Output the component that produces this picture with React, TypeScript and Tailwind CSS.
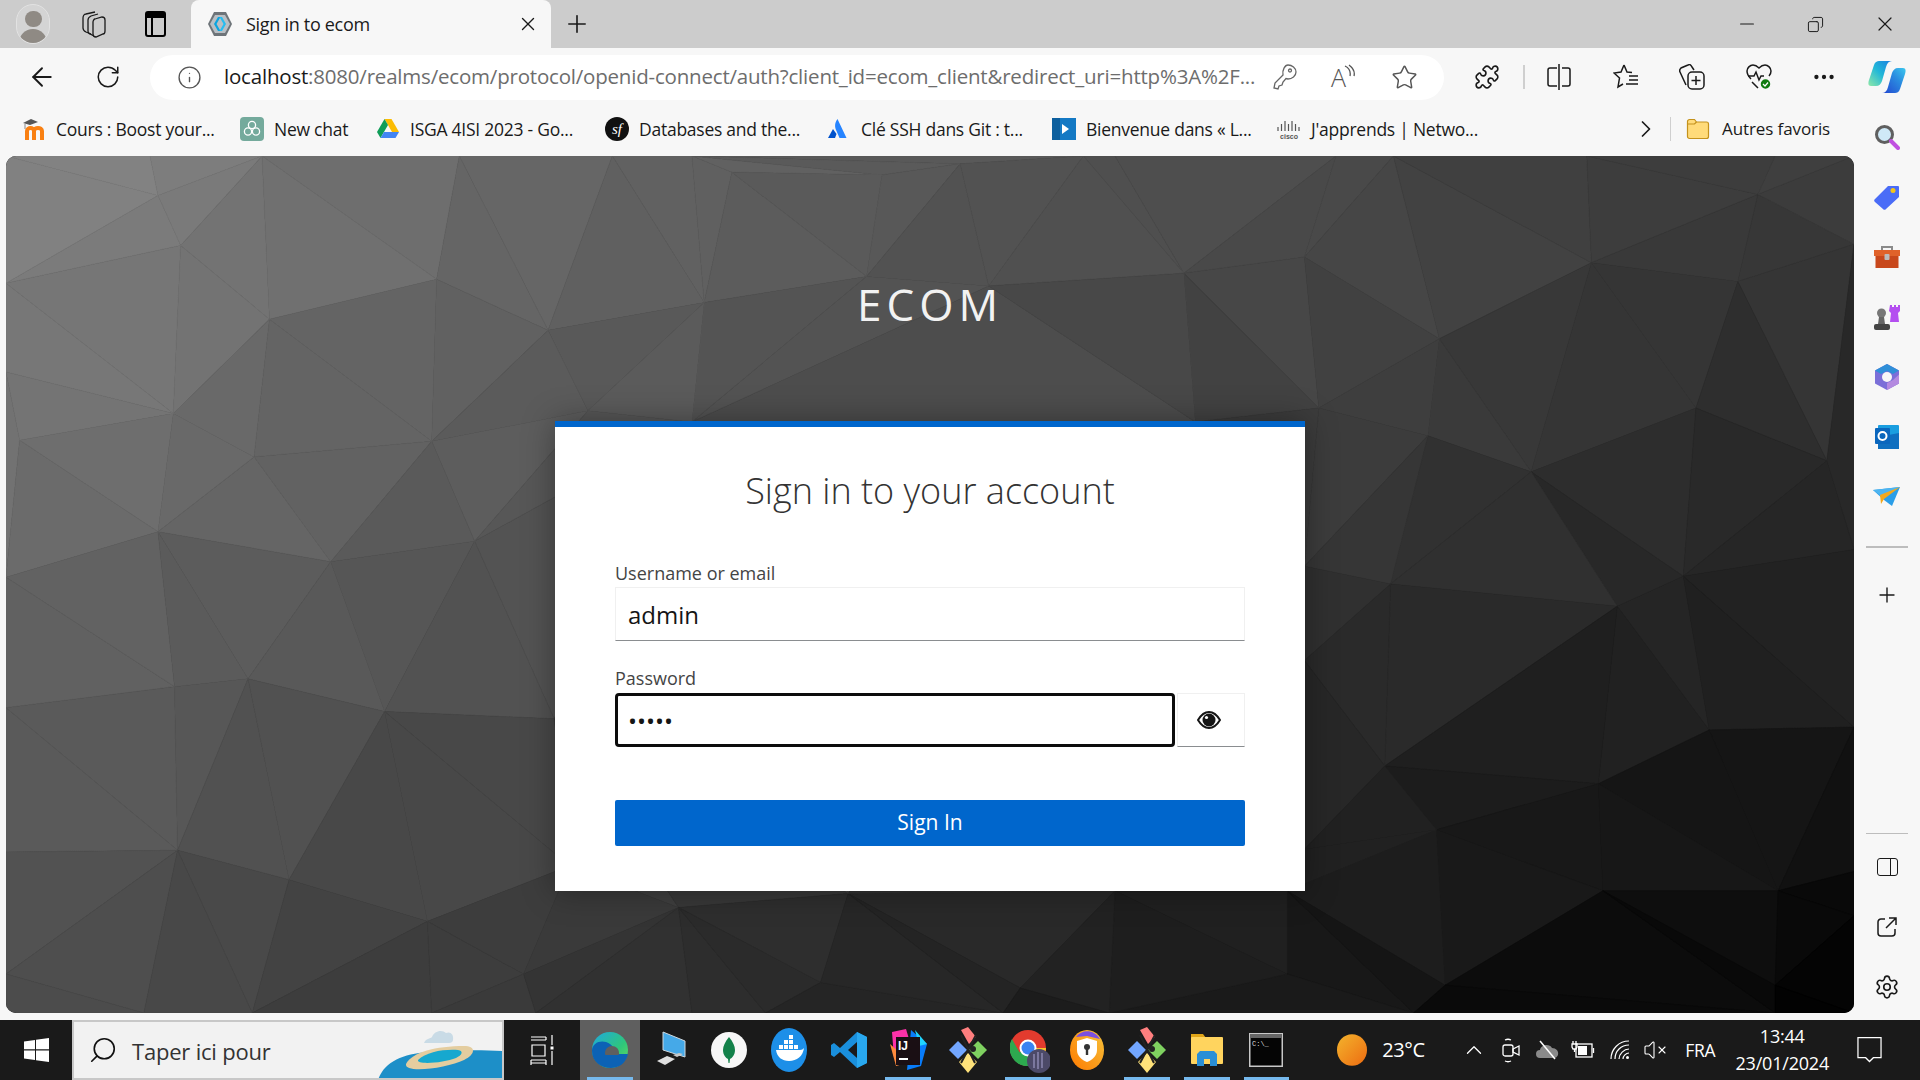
import React from 'react'
import {
  ArrowLeft, RotateCw, Info, Star, Puzzle, Minus, Copy, X, Plus, MoreHorizontal,
  Settings, ChevronRight, ChevronUp, Search, VolumeX,
} from 'lucide-react'

// Low-poly backdrop: vertices read off the reference, in zoom coordinates
const LEFT_PTS = [
  [10,10],[245,10],[428,10],[750,10],[1000,10],[1130,10],[1195,40],[1440,45],[1568,25],[258,82],[295,172],[10,240],
  [440,305],[713,233],[895,325],[1150,275],[1415,228],[283,475],[32,523],[10,400],[415,553],[705,525],[960,470],
  [1130,490],[258,688],[10,770],[540,742],[775,705],[285,967],[10,1005],[405,953],[628,1012],[905,1025],[290,1262],
  [10,1265],[472,1315],[698,1390],[10,1485],[235,1558],[412,1558],[705,1558],[855,1485],[1108,1365],[930,1290],
  [875,1558],[1130,1558],[1385,1340],[1340,1500],[1250,1558],[10,1558],
]
const RIGHT_PTS = [
  [215,10],[270,10],[390,222],[600,193],[655,10],[755,10],[835,340],[1100,203],[1092,10],[1390,80],[1420,10],
  [1558,170],[1355,237],[1282,465],[995,580],[625,465],[815,515],[1558,10],[1510,560],[1558,720],[1260,768],
  [1145,822],[750,782],[600,750],[1305,1045],[1558,1040],[740,1110],[1112,1142],[830,1225],[600,920],[1120,1335],
  [1425,1335],[1558,1300],[845,1505],[570,1485],[570,1335],[600,1260],[1420,1505],[1558,1380],[1420,1558],[790,1558],
  [270,1335],[105,1510],[260,1558],[75,1558],[410,490],[50,245],[1558,1558],
]
const W = 1848
const H = 857

function toY(y: number) {
  if (y <= 10) return 0
  if (y >= 1558) return H
  return y / 1.802 + 150 - 156
}
const points: number[][] = [
  ...LEFT_PTS.map(([x, y]) => [x <= 10 ? 0 : x / 1.633 - 6, toY(y)]),
  ...RIGHT_PTS.map(([x, y]) => [x >= 1558 ? W : 960 + x / 1.742 - 6, toY(y)]),
]

// Bowyer-Watson
function triangulate(pts: number[][]) {
  const all = [...pts, [-9000, -9000], [12000, -9000], [1000, 12000]]
  const n = pts.length
  let tris: number[][] = [[n, n + 1, n + 2]]
  const inCircle = (t: number[], p: number[]) => {
    const [a, b, c] = t.map((i) => all[i])
    const d = 2 * (a[0] * (b[1] - c[1]) + b[0] * (c[1] - a[1]) + c[0] * (a[1] - b[1]))
    const sa = a[0] ** 2 + a[1] ** 2
    const sb = b[0] ** 2 + b[1] ** 2
    const sc = c[0] ** 2 + c[1] ** 2
    const ux = (sa * (b[1] - c[1]) + sb * (c[1] - a[1]) + sc * (a[1] - b[1])) / d
    const uy = (sa * (c[0] - b[0]) + sb * (a[0] - c[0]) + sc * (b[0] - a[0])) / d
    return (p[0] - ux) ** 2 + (p[1] - uy) ** 2 < (a[0] - ux) ** 2 + (a[1] - uy) ** 2
  }
  for (let i = 0; i < n; i++) {
    const bad = tris.filter((t) => inCircle(t, all[i]))
    const edges = new Map<string, number[]>()
    bad.forEach((t) => {
      ;[[t[0], t[1]], [t[1], t[2]], [t[2], t[0]]].forEach(([u, v]) => {
        const k = u < v ? `${u}-${v}` : `${v}-${u}`
        if (edges.has(k)) edges.set(k, [])
        else edges.set(k, [u, v])
      })
    })
    tris = tris.filter((t) => !bad.includes(t))
    edges.forEach((e) => {
      if (e.length) tris.push([e[0], e[1], i])
    })
  }
  return tris.filter((t) => t.every((i) => i < n))
}

const SHADES = [
  [134, 86, 60],
  [104, 66, 32],
  [80, 34, 2],
]
function shade(x: number, y: number, seed: number) {
  const u = Math.min(1.999, (x / W) * 2)
  const v = Math.min(1.999, (y / H) * 2)
  const i = Math.floor(u)
  const j = Math.floor(v)
  const fu = u - i
  const fv = v - j
  const top = SHADES[j][i] * (1 - fu) + SHADES[j][i + 1] * fu
  const bot = SHADES[j + 1][i] * (1 - fu) + SHADES[j + 1][i + 1] * fu
  const noise = (Math.sin(seed * 12.9898) * 43758.5453) % 1
  const g = Math.max(0, Math.round(top * (1 - fv) + bot * fv + noise * 3))
  return `rgb(${g},${g},${g})`
}

function LowPoly() {
  const tris = triangulate(points)
  return (
    <svg viewBox={`0 0 ${W} ${H}`} className="block w-full h-full [grid-area:1/1]" preserveAspectRatio="none">
      {tris.map((t, idx) => {
        const [a, b, c] = t.map((i) => points[i])
        const fill = shade((a[0] + b[0] + c[0]) / 3, (a[1] + b[1] + c[1]) / 3, idx + 1)
        return <polygon key={idx} points={`${a} ${b} ${c}`} fill={fill} stroke={fill} strokeWidth="0.6" />
      })}
    </svg>
  )
}

/* ---- little logos ---- */
const Keycloak = () => (
  <svg width="26" height="26" viewBox="0 0 26 26">
    <path d="M7 1h12l6 12-6 12H7L1 13z" fill="#6e7479" />
    <path d="M8 4h10l5 9-5 9H8l-5-9z" fill="#b9bfc4" />
    <path d="M11 6l-4 7 4 7h2.500l-4-7 4-7z" fill="#0aa5e0" />
    <path d="M15 6l4 7-4 7h-2.500l4-7-4-7z" fill="#27bdf0" />
  </svg>
)
const Moodle = () => (
  <svg width="26" height="24" viewBox="0 0 26 24">
    <path d="M1 6l8-4 7 3-8 3z" fill="#555" />
    <path d="M3 7v5" stroke="#888" strokeWidth="1" />
    <path d="M5 23V14c0-4 7-4 7 0v9M12 14c0-4 8-4 8 0v9" fill="none" stroke="#f98012" strokeWidth="4" />
  </svg>
)
const ChatGpt = () => (
  <svg width="24" height="24" viewBox="0 0 24 24">
    <rect width="24" height="24" rx="4" fill="#74aa9c" />
    <g fill="none" stroke="#fff" strokeWidth="1.300">
      <circle cx="12" cy="8" r="3.600" />
      <circle cx="8" cy="14.500" r="3.600" />
      <circle cx="16" cy="14.500" r="3.600" />
    </g>
  </svg>
)
const Drive = () => (
  <svg width="24" height="24" viewBox="0 0 24 24">
    <path d="M8.500 2h7L23 15h-7z" fill="#fbbc04" />
    <path d="M8.500 2L1 15l3.500 6L12 8z" fill="#0f9d58" />
    <path d="M4.500 21h15L23 15H8z" fill="#4285f4" />
  </svg>
)
const Symfony = () => (
  <svg width="24" height="24" viewBox="0 0 24 24">
    <circle cx="12" cy="12" r="12" fill="#111" />
    <text x="12" y="17" textAnchor="middle" fontFamily="'Liberation Serif', serif" fontStyle="italic" fontSize="15" fill="#fff">sf</text>
  </svg>
)
const Atlassian = () => (
  <svg width="20" height="22" viewBox="0 0 20 22">
    <path d="M10.500 1c-3 4-3 8-1 12l3 7h7z" fill="#2684ff" />
    <path d="M6 11L1 20h7l1.500-4z" fill="#0052cc" />
  </svg>
)
const VideoTile = () => (
  <svg width="24" height="22" viewBox="0 0 24 22">
    <rect width="24" height="22" fill="#1479c4" />
    <rect x="0" y="0" width="8" height="22" fill="#0c5f9e" />
    <path d="M10 6l7 5-7 5z" fill="#fff" />
  </svg>
)
const Cisco = () => (
  <svg width="24" height="24" viewBox="0 0 24 24">
    <g stroke="#555" strokeWidth="1.200">
      {[[1, 10, 14], [4.5, 7, 14], [8, 4, 14], [11.5, 7, 14], [15, 4, 14], [18.5, 7, 14], [22, 10, 14]].map(([x, a, b]) => (
        <line key={x} x1={x} x2={x} y1={a} y2={b} />
      ))}
    </g>
    <text x="12" y="22" textAnchor="middle" fontFamily="'Liberation Sans', sans-serif" fontSize="7" fontWeight="700" fill="#555">cisco</text>
  </svg>
)
const Folder = () => (
  <svg width="24" height="22" viewBox="0 0 24 22">
    <path d="M1.500 3.500A2 2 0 0 1 3.500 1.500h5l2 2.500h10a2 2 0 0 1 2 2v12.500a2 2 0 0 1-2 2h-17a2 2 0 0 1-2-2z" fill="#ffdb7a" stroke="#c4921c" strokeWidth="1.200" />
    <path d="M1.500 6h7l2-2" fill="none" stroke="#c4921c" strokeWidth="1.200" />
  </svg>
)
const Copilot = () => (
  <svg width="38" height="32" viewBox="0 0 38 32">
    <defs>
      <linearGradient id="cp1" x1="0" y1="1" x2="1" y2="0"><stop offset="0" stopColor="#8ee8a8" /><stop offset="0.5" stopColor="#22b8d8" /><stop offset="1" stopColor="#1a7fe0" /></linearGradient>
      <linearGradient id="cp2" x1="0" y1="1" x2="1" y2="0"><stop offset="0" stopColor="#2346d0" /><stop offset="0.6" stopColor="#2a8ce0" /><stop offset="1" stopColor="#3cc8ee" /></linearGradient>
    </defs>
    <path d="M11 0h13c-3 0-5 2-6 6l-4 14c-1 3-3 5-6 5H3c-3 0-3-3-2-6L6 4c1-3 3-4 5-4z" fill="url(#cp1)" />
    <path d="M27 32H14c3 0 5-2 6-6l4-14c1-3 3-5 6-5h5c3 0 3 3 2 6l-5 15c-1 3-3 4-5 4z" fill="url(#cp2)" />
  </svg>
)

/* ---- sidebar logos ---- */
const SideSearch = () => (
  <svg width="26" height="26" viewBox="0 0 26 26">
    <circle cx="10.500" cy="10.500" r="8" fill="#cfe9f7" stroke="#5f5f5f" strokeWidth="3" />
    <path d="M17 17l7 7" stroke="#c04fe0" strokeWidth="4" strokeLinecap="round" />
  </svg>
)
const SideTag = () => (
  <svg width="26" height="26" viewBox="0 0 26 26">
    <path d="M1 15L14 2h10a1 1 0 0 1 1 1v10L12 25a2 2 0 0 1-3 0L1 18a2 2 0 0 1 0-3z" fill="#4a6cf7" />
    <circle cx="19" cy="6.500" r="2.500" fill="#f5c518" />
  </svg>
)
const SideBox = () => (
  <svg width="28" height="24" viewBox="0 0 28 24">
    <path d="M9 5V2h10v3" fill="none" stroke="#8a8a8a" strokeWidth="2" />
    <rect x="1" y="5" width="26" height="6" fill="#e0622a" />
    <rect x="2.500" y="11" width="23" height="12" fill="#c8481c" />
    <rect x="11.500" y="9" width="5" height="6" rx="1" fill="#bbb" />
  </svg>
)
const SideChess = () => (
  <svg width="28" height="28" viewBox="0 0 28 28">
    <path d="M17 2h2v2h2V2h2v2h2V2h2v6l-2 2 1 9h-9l1-9-2-2z" fill="#b44ff0" />
    <circle cx="8.500" cy="10" r="4.500" fill="#777" />
    <path d="M6 14h5l1 7H5z" fill="#666" />
    <rect x="1" y="21" width="16" height="6" rx="2" fill="#444" />
  </svg>
)
const SideM365 = () => (
  <svg width="26" height="28" viewBox="0 0 26 28">
    <path d="M13 1l12 6.500v13L13 27 1 20.500v-13z" fill="#7b6fd8" />
    <path d="M13 1l12 6.500-6 3.500-6-3L7 11 1 7.500z" fill="#2f8fd8" />
    <path d="M13 27l12-6.500v-9L19 17l-6 3z" fill="#b48ae0" />
    <circle cx="13" cy="14" r="5" fill="#f7f7f7" />
  </svg>
)
const SideOutlook = () => (
  <svg width="26" height="26" viewBox="0 0 26 26">
    <rect x="4" y="1" width="21" height="24" rx="1" fill="#1a9ee0" />
    <path d="M4 13l21-4v16H4z" fill="#0f6fc0" />
    <rect x="1" y="4" width="15" height="16" rx="1" fill="#0a66bd" />
    <circle cx="8.500" cy="12" r="4" fill="none" stroke="#fff" strokeWidth="2" />
  </svg>
)
const SidePaper = () => (
  <svg width="28" height="20" viewBox="0 0 28 20">
    <path d="M0 3l27-3-8 19-8-6z" fill="#2a9ee8" />
    <path d="M0 3l27-3L8 9z" fill="#4db4f0" />
    <path d="M27 0L7 8l1 9 3-5z" fill="#f2a81d" />
  </svg>
)
const IconCell = ({ children }: { children: React.ReactNode }) => (
  <div className="h-[60px] flex items-center justify-center">{children}</div>
)

/* ---- taskbar logos ---- */
const WinLogo = () => (
  <svg width="25" height="24" viewBox="0 0 25 24" fill="#fff">
    <path d="M0 3.500l11-1.500v9.300H0zM12 1.800L25 0v11.300H12zM0 12.500h11V22L0 20.500zM12 12.500h13V24l-13-1.800z" />
  </svg>
)
const TaskView = () => (
  <svg width="24" height="32" viewBox="0 0 24 32" fill="none" stroke="#fff" strokeWidth="1.200">
    <path d="M1 3h15M16 3v3M1 6h15M2 11h13v11H2zM1 26h15M1 29h15M16 26v5M1 26v5" />
    <path d="M22 1v10M22 17v14" />
    <rect x="20.500" y="12.500" width="3" height="3" fill="#fff" stroke="none" />
  </svg>
)
const EdgeLogo = () => (
  <svg width="38" height="38" viewBox="0 0 38 38">
    <defs>
      <linearGradient id="edg" x1="0" y1="0" x2="1" y2="1"><stop offset="0" stopColor="#1fa8e0" /><stop offset="0.6" stopColor="#2fc67a" /><stop offset="1" stopColor="#6bdc5c" /></linearGradient>
    </defs>
    <circle cx="19" cy="19" r="18" fill="url(#edg)" />
    <path d="M1 20c0-8 8-11 14-9 7 2 9 8 6 12h16c-2 9-9 14-17 14C9 37 1 30 1 20z" fill="#0c62b5" />
    <path d="M14 22c0-4 3-7 7-7s7 3 7 7c0 1 0 2-1 2H15c-1 0-1-1-1-2z" fill="#5f5f5f" />
  </svg>
)
const PcLogo = () => (
  <svg width="34" height="38" viewBox="0 0 34 38">
    <path d="M10 1l22 9v16l-22-7z" fill="#45a9e8" stroke="#cfd8de" strokeWidth="1" />
    <path d="M4 30l10-5 8 3-10 6z" fill="#e0e0e0" />
    <path d="M20 24l6-2 4 1-6 3z" fill="#c8c8c8" />
  </svg>
)
const Mongo = () => (
  <svg width="36" height="36" viewBox="0 0 36 36">
    <circle cx="18" cy="18" r="18" fill="#f7f7f7" />
    <path d="M18 5c4 5 6 9 6 13 0 5-3 8-5 9l-.5 4h-1L17 27c-2-1-5-4-5-9 0-4 2-8 6-13z" fill="#13814a" />
  </svg>
)
const Docker = () => (
  <svg width="36" height="44" viewBox="0 0 36 44">
    <ellipse cx="18" cy="22" rx="18" ry="22" fill="#1d8fe8" />
    <path d="M5 22h24c2 0 3-1 4-2-1 8-7 13-15 13-7 0-12-4-13-11z" fill="#fff" />
    <g fill="#fff">
      <rect x="8" y="17" width="4" height="4" /><rect x="13" y="17" width="4" height="4" /><rect x="18" y="17" width="4" height="4" /><rect x="23" y="17" width="4" height="4" />
      <rect x="13" y="12" width="4" height="4" /><rect x="18" y="12" width="4" height="4" /><rect x="18" y="7" width="4" height="4" />
    </g>
  </svg>
)
const VsCode = () => (
  <svg width="36" height="36" viewBox="0 0 36 36">
    <path d="M26 0l10 5v26l-10 5L9 20 3 25 0 23V13l3-2 6 5zM26 10l-9 8 9 8z" fill="#1a8fdc" />
    <path d="M26 0l10 5v26l-10 5z" fill="#29a8ef" />
  </svg>
)
const Idea = () => (
  <svg width="38" height="44" viewBox="0 0 38 44">
    <path d="M3 4l14-3 3 10L5 30z" fill="#fc31a8" />
    <path d="M1 16l6 22 14-4z" fill="#ff8a3d" />
    <path d="M22 2l16 14-6 22-14 4z" fill="#087cfa" />
    <path d="M26 2l12 14-8 2z" fill="#21d4fd" />
    <rect x="7" y="9" width="24" height="28" fill="#1a0f14" />
    <text x="9" y="22" fontFamily="'Liberation Sans', sans-serif" fontWeight="700" fontSize="12" fill="#fff">IJ</text>
    <rect x="10" y="30" width="9" height="2" fill="#fff" />
  </svg>
)
const GitGui = () => (
  <svg width="38" height="46" viewBox="0 0 38 46">
    <path d="M12 3l7-3 8 10-7 7z" fill="#ff7f7f" />
    <path d="M9 14l9 9-9 9-9-9z" fill="#72a6ff" />
    <path d="M29 14l9 9-9 9-9-9z" fill="#7fd160" />
    <path d="M19 26l9 9-9 11-9-11z" fill="#ffe27a" />
    <path d="M12 8l14 28M27 8L12 36" stroke="#222" strokeWidth="2" />
    <circle cx="24" cy="22" r="3" fill="#222" />
  </svg>
)
const Chrome = () => (
  <svg width="40" height="48" viewBox="0 0 40 48" className="ml-[4px]">
    <circle cx="18" cy="22" r="18" fill="#e33b2e" />
    <path d="M18 22L2 30a18 18 0 0 0 18 10z" fill="#2da94f" />
    <path d="M2 13l9 16 7 11a18 18 0 0 1-16-27z" fill="#2da94f" />
    <path d="M18 22h18a18 18 0 0 1-16 18z" fill="#f8c52b" />
    <circle cx="18" cy="22" r="8.500" fill="#fff" />
    <circle cx="18" cy="22" r="6.500" fill="#3a83f1" />
    <circle cx="29" cy="35" r="12" fill="#4c4a68" />
    <path d="M24 28v14M28 26v17M32 27v15" stroke="#8b88b0" strokeWidth="1.500" />
  </svg>
)
const Avast = () => (
  <svg width="34" height="40" viewBox="0 0 34 40">
    <defs>
      <linearGradient id="av" x1="0" y1="1" x2="1" y2="0"><stop offset="0" stopColor="#ff7a00" /><stop offset="1" stopColor="#f5c33b" /></linearGradient>
    </defs>
    <ellipse cx="17" cy="20" rx="17" ry="20" fill="url(#av)" />
    <path d="M6 7c6-8 18-8 24 2L17 6z" fill="#7b4fe0" />
    <path d="M17 8l10 3v9c0 6-5 10-10 12-5-2-10-6-10-12v-9z" fill="#fff" />
    <circle cx="17" cy="17" r="3" fill="#333" />
    <rect x="15.800" y="18" width="2.400" height="7" fill="#333" />
  </svg>
)
const Explorer = () => (
  <svg width="34" height="36" viewBox="0 0 34 36">
    <path d="M1 2h12l3 4H1z" fill="#e0a518" />
    <rect x="1" y="5" width="32" height="27" rx="1" fill="#ffd45e" />
    <path d="M7 34V22l3-3h14l3 3v12h-7v-7h-6v7z" fill="#2a8fd6" />
  </svg>
)
const Cmd = () => (
  <svg width="34" height="34" viewBox="0 0 34 34">
    <rect width="34" height="34" fill="#c8c8c8" />
    <rect x="1" y="1" width="32" height="4" fill="#666" />
    <rect x="1.500" y="5" width="31" height="27.500" fill="#050505" />
    <text x="3" y="13" fontFamily="'Liberation Mono', monospace" fontSize="7" fill="#ddd">C:\_</text>
  </svg>
)

const TaskCell = ({ children, active, running }: { children: React.ReactNode; active?: boolean; running?: boolean }) => (
  <div className={`w-[59.7px] h-full flex flex-col items-center justify-center relative ${active ? 'bg-[#5f5f5f]' : ''}`}>
    {children}
    {running && <div className="absolute bottom-0 inset-x-[7px] h-[3px] bg-[#76b9ed]" />}
  </div>
)

const BOOKMARKS: [React.ReactNode, string, string][] = [
  [<Moodle />, 'Cours : Boost your...', 'w-[218px]'],
  [<ChatGpt />, 'New chat', 'w-[136px]'],
  [<Drive />, 'ISGA 4ISI 2023 - Go...', 'w-[229px]'],
  [<Symfony />, 'Databases and the...', 'w-[222px]'],
  [<Atlassian />, 'Clé SSH dans Git : t...', 'w-[225px]'],
  [<VideoTile />, 'Bienvenue dans « L...', 'w-[225px]'],
  [<Cisco />, "J'apprends | Netwo...", 'w-[357px]'],
]

export default function App() {
  return (
    <div className="w-[1920px] h-screen overflow-hidden flex flex-col bg-[#f7f7f7] font-['Open_Sans',sans-serif] text-[#1a1a1a]">
      {/* Onglets */}
      <div className="h-12 bg-[#cccccc] flex items-center shrink-0">
        <div className="w-[66px] flex justify-center">
          <div className="w-[34px] h-[40px] rounded-full bg-[#d4d4d4] border border-[#e2e2e2] flex flex-col items-center overflow-hidden">
            <div className="w-[17px] h-[19px] mt-[6px] rounded-full bg-[#8f8a84]" />
            <div className="w-[28px] h-[16px] mt-[2px] rounded-t-full bg-[#8f8a84]" />
          </div>
        </div>
        <div className="w-[54px] flex justify-center">
          <svg width="26" height="28" viewBox="0 0 26 28" fill="none" stroke="#1a1a1a" strokeWidth="1.300">
            <path d="M11 24L6 22c-2-1-3-2-3-4V8c0-2 1-4 3-4l9-2" />
            <path d="M14 26l-4-2c-1 0-2-2-2-3V10c0-2 1-3 3-4l7-2" />
            <path d="M15 9l7-2c2 0 3 1 3 3v11c0 2-1 3-2 3l-7 3c-2 0-3-1-3-3V12c0-1 1-3 2-3z" />
          </svg>
        </div>
        <div className="w-[71px] flex justify-center">
          <div className="w-[21px] h-[26px] rounded-[3px] border-2 border-black flex flex-col">
            <div className="h-[5px] bg-black" />
            <div className="flex-1 w-[6px] border-r-2 border-black" />
          </div>
        </div>
        <div className="w-[360px] h-full bg-[#f7f7f7] rounded-t-lg flex items-center pl-[16px] pr-[12px]">
          <Keycloak />
          <span className="ml-[13px] text-[18px] flex-1 tracking-[-0.3px]">Sign in to ecom</span>
          <X size={22} strokeWidth={1.5} />
        </div>
        <div className="w-[50px] flex justify-center ml-[1px]"><Plus size={28} strokeWidth={1.4} /></div>
        <div className="flex-1" />
        <div className="w-[69px] flex justify-center"><Minus size={22} strokeWidth={1.2} /></div>
        <div className="w-[69px] flex justify-center"><Copy size={17} strokeWidth={1.4} className="-scale-x-100" /></div>
        <div className="w-[70px] flex justify-center pr-[1px]"><X size={24} strokeWidth={1.2} /></div>
      </div>

      {/* Barre d'adresse */}
      <div className="h-[58px] flex items-center shrink-0">
        <div className="w-[84px] flex justify-center"><ArrowLeft size={30} strokeWidth={1.5} /></div>
        <div className="w-[48px] flex justify-center"><RotateCw size={26} strokeWidth={1.4} /></div>
        <div className="ml-[18px] w-[1294px] h-[45px] rounded-full bg-white flex items-center pl-[27px] overflow-hidden">
          <Info size={25} strokeWidth={1.3} className="text-[#555] shrink-0" />
          <span className="ml-[22px] w-[1030px] shrink-0 text-[20.500px] whitespace-nowrap tracking-[-0.2px] -mt-[2px]">
            localhost<span className="text-[#6d6d6d]">:8080/realms/ecom/protocol/openid-connect/auth?client_id=ecom_client&amp;redirect_uri=http%3A%2F...</span>
          </span>
          <svg width="24" height="26" viewBox="0 0 24 26" fill="none" stroke="#666" strokeWidth="1.300" className="ml-[19px] shrink-0">
            <path d="M15 1c4 0 8 3 8 7s-4 7-8 7l-2-.5L10 18l-1 3-3 1-1 3-4-1 1-5 8-8c-1-5 2-10 5-10z" />
            <circle cx="17" cy="6.500" r="1.500" />
          </svg>
          <div className="ml-[34px] w-[26px] shrink-0 flex items-start">
            <span className="text-[25px] font-light text-[#555] leading-none">A</span>
            <svg width="12" height="16" viewBox="0 0 12 16" fill="none" stroke="#555" strokeWidth="1.300" className="shrink-0 -ml-[2px] -mt-[1px]"><path d="M1 2c4 2 6 5 5 10M5 1c4 3 6 7 5 11" /></svg>
          </div>
          <Star size={27} strokeWidth={1.3} className="text-[#555] ml-[34px] shrink-0" />
        </div>
        <div className="ml-[18px] w-[50px] flex justify-center"><Puzzle size={26} strokeWidth={1.5} /></div>
        <div className="ml-[11px] w-[2px] h-[24px] bg-[#cfcfcf]" />
        <div className="w-[68px] flex justify-center">
          <svg width="24" height="26" viewBox="0 0 24 26" fill="none" stroke="#1a1a1a" strokeWidth="1.500"><path d="M10 4H3a2 2 0 0 0-2 2v14a2 2 0 0 0 2 2h7M15 4h6a2 2 0 0 1 2 2v14a2 2 0 0 1-2 2h-6M12 0v26" /></svg>
        </div>
        <div className="w-[66px] flex justify-center">
          <svg width="26" height="26" viewBox="0 0 26 26" fill="none" stroke="#1a1a1a" strokeWidth="1.500"><path d="M11 1l3 7 5 .5M11 1L8 8l-7 1 5.500 5L5 23l5-3M16 12h9M16 16h9M13 20h12" /></svg>
        </div>
        <div className="w-[66px] flex justify-center">
          <svg width="26" height="26" viewBox="0 0 26 26" fill="none" stroke="#1a1a1a" strokeWidth="1.500"><path d="M7 21L1 8c-1-2 0-3 1-4l7-3c2-1 3 0 4 2l2 3" /><rect x="9" y="8" width="16" height="17" rx="4" /><path d="M17 12v9M12.500 16.500h9" /></svg>
        </div>
        <div className="w-[67px] flex justify-center">
          <svg width="26" height="26" viewBox="0 0 26 26" fill="none" stroke="#1a1a1a" strokeWidth="1.500"><path d="M5 15C2 12 1 10 1 7c0-3 3-6 6-6 3 0 5 2 6 3 1-1 3-3 6-3 3 0 6 3 6 6 0 2-1 4-2 5" /><path d="M2 12h6l2-4 3 8 2-4h3M6 18l6 6" /><circle cx="19.500" cy="20" r="5.500" fill="#107c10" stroke="#f7f7f7" /><path d="M17 20l2 2 3-3.500" stroke="#fff" strokeWidth="1.200" /></svg>
        </div>
        <div className="w-[64px] flex justify-center"><MoreHorizontal size={26} strokeWidth={2} /></div>
        <div className="w-[62px] flex justify-center"><Copilot /></div>
      </div>

      {/* Favoris + page + barre latérale */}
      <div className="h-[914px] flex shrink-0">
        <div className="w-[1854px] flex flex-col">
          <div className="h-[50px] flex items-center pl-[22px] pb-[4px] shrink-0">
            {BOOKMARKS.map(([icon, label, w]) => (
              <div key={label} className={`${w} flex items-center shrink-0`}>
                <div className="w-[34px] flex items-center">{icon}</div>
                <span className="text-[17.500px] whitespace-nowrap tracking-[-0.25px]">{label}</span>
              </div>
            ))}
            <ChevronRight size={28} strokeWidth={1.5} className="-ml-[2px]" />
            <div className="w-[1px] h-[24px] bg-[#cfcfcf] ml-[10px] mr-[15px]" />
            <div className="w-[36px]"><Folder /></div>
            <span className="text-[17px] whitespace-nowrap tracking-[-0.1px]">Autres favoris</span>
          </div>

          <div className="ml-[6px] w-[1848px] h-[857px] rounded-[10px] overflow-hidden grid bg-black">
            <LowPoly />
            <div className="[grid-area:1/1] flex flex-col items-center">
              <div className="h-[265px] flex items-center text-[44px] leading-none tracking-[5px] text-[#f2f2f2] pt-[31px]">ECOM</div>
              <div className="w-[750px] h-[470px] bg-white border-t-[6px] border-[#0066cc] shadow-[0_0_30px_rgba(0,0,0,0.35)] px-[60px]">
                <h1 className="text-center text-[36px] font-light text-[#333] mt-[39px] leading-[50px]">Sign in to your account</h1>
                <label className="block text-[18px] text-[#444] mt-[44px] leading-[26px]">Username or email</label>
                <input
                  readOnly
                  defaultValue="admin"
                  className="block mt-[1px] w-full h-[54px] px-[12px] text-[24px] text-[#151515] bg-white border border-[#f0f0f0] border-b-[#8a8d90] outline-none"
                />
                <label className="block text-[18px] text-[#444] mt-[24px] leading-[26px]">Password</label>
                <div className="flex mt-[2px] h-[54px]">
                  <input
                    readOnly
                    type="password"
                    defaultValue="admin"
                    className="block w-[560px] h-full pl-[10px] text-[24px] text-[#151515] bg-white border-[3px] border-[#0c0c0c] rounded-[4px] outline-none"
                  />
                  <div className="ml-[2px] flex-1 flex items-center justify-center border border-[#f0f0f0] border-b-[#8a8d90]">
                    <svg width="24" height="18" viewBox="0 0 24 18" className="-ml-[4px]">
                      <path d="M1 9c3-5 7-8 11-8s8 3 11 8c-3 5-7 8-11 8S4 14 1 9z" fill="none" stroke="#151515" strokeWidth="2" />
                      <circle cx="12" cy="9" r="6.500" fill="#151515" />
                      <circle cx="9.500" cy="6.500" r="1.600" fill="#fff" />
                    </svg>
                  </div>
                </div>
                <button className="block mt-[53px] w-full h-[46px] bg-[#0066cc] rounded-[2px] text-white text-[21px]">Sign In</button>
              </div>
            </div>
          </div>
        </div>

        <div className="w-[66px] flex flex-col pt-[1px]">
          <IconCell><SideSearch /></IconCell>
          <IconCell><SideTag /></IconCell>
          <IconCell><SideBox /></IconCell>
          <IconCell><SideChess /></IconCell>
          <IconCell><SideM365 /></IconCell>
          <IconCell><SideOutlook /></IconCell>
          <IconCell><SidePaper /></IconCell>
          <div className="mt-[19px] mx-[12px] h-[2px] bg-[#bdbdbd]" />
          <div className="mt-[17px]"><IconCell><Plus size={24} strokeWidth={1.4} /></IconCell></div>
          <div className="mt-auto mx-[12px] h-[1px] bg-[#bdbdbd] mb-[3px]" />
          <IconCell>
            <div className="w-[21px] h-[18px] rounded-[3px] border-[1.500px] border-[#1a1a1a] flex justify-end"><div className="w-[7px] border-l-[1.500px] border-[#1a1a1a]" /></div>
          </IconCell>
          <IconCell>
            <svg width="20" height="20" viewBox="0 0 20 20" fill="none" stroke="#1a1a1a" strokeWidth="1.500"><path d="M8 2H4a3 3 0 0 0-3 3v11a3 3 0 0 0 3 3h11a3 3 0 0 0 3-3v-4M9 11L19 1M12 1h7v7" /></svg>
          </IconCell>
          <IconCell><Settings size={26} strokeWidth={1.5} /></IconCell>
          <div className="h-[3px]" />
        </div>
      </div>

      {/* Barre des tâches */}
      <div className="h-[60px] bg-[#1a1a1a] flex items-center shrink-0 text-white">
        <div className="w-[72px] flex justify-center"><WinLogo /></div>
        <div className="w-[432px] h-full bg-[#f2f2f2] border-2 border-[#c8c8c8] flex items-center pl-[14px] relative overflow-hidden">
          <Search size={30} strokeWidth={1.3} className="text-[#111] -scale-x-100" />
          <span className="ml-[14px] text-[22px] text-[#333] tracking-[-0.2px] mt-[2px]">Taper ici pour</span>
          <svg width="124" height="58" viewBox="0 0 124 58" className="absolute right-0 top-0">
            <path d="M0 58c6-18 24-26 50-28 26-2 54-2 74-1v29z" fill="#1d8fc8" />
            <path d="M28 42c6-12 30-18 58-18 12 0 12 8 0 14-16 8-60 14-58 4z" fill="#e4cd9f" />
            <path d="M40 38c8-8 26-11 40-10 6 1 4 5-2 8-12 5-40 7-38 2z" fill="#16a8cf" />
            <path d="M46 21c2-5 6-4 8-6 2-6 10-8 14-4 4-2 8 1 7 7 0 2-2 3-4 3z" fill="#c9dbe6" />
          </svg>
        </div>
        <div className="w-[76px] flex justify-center"><TaskView /></div>
        <TaskCell active running><EdgeLogo /></TaskCell>
        <TaskCell><PcLogo /></TaskCell>
        <TaskCell><Mongo /></TaskCell>
        <TaskCell><Docker /></TaskCell>
        <TaskCell><VsCode /></TaskCell>
        <TaskCell running><Idea /></TaskCell>
        <TaskCell><GitGui /></TaskCell>
        <TaskCell running><Chrome /></TaskCell>
        <TaskCell><Avast /></TaskCell>
        <TaskCell running><GitGui /></TaskCell>
        <TaskCell running><Explorer /></TaskCell>
        <TaskCell running><Cmd /></TaskCell>
        <div className="ml-[41px] w-[30px] h-[30px] rounded-full bg-gradient-to-br from-[#f2b32c] to-[#ec6a10] scale-y-[1.05]" />
        <span className="ml-[15px] text-[20px] w-[44px] whitespace-nowrap tracking-[-0.4px]">23°C</span>
        <div className="ml-[30px] w-[36px] flex justify-center"><ChevronUp size={26} strokeWidth={1.2} /></div>
        <div className="w-[37px] flex justify-center">
          <svg width="18" height="26" viewBox="0 0 18 26" fill="none" stroke="#fff" strokeWidth="1.300"><rect x="1" y="8" width="10" height="11" rx="2" /><path d="M11 12l6-3v9l-6-3zM3 3c2-1 4-1 6 0M3 24c2 1 4 1 6 0" /></svg>
        </div>
        <div className="w-[36px] flex justify-center">
          <svg width="24" height="20" viewBox="0 0 24 20"><path d="M5 18a4 4 0 0 1 0-8c1-5 9-7 12-2 4 0 7 3 6 7-1 2-2 3-4 3z" fill="#8a8a8a" /><path d="M5 1l15 18" stroke="#fff" strokeWidth="1.500" /></svg>
        </div>
        <div className="w-[36px] flex justify-center">
          <svg width="24" height="20" viewBox="0 0 24 20" fill="none" stroke="#fff" strokeWidth="1.300"><path d="M2 1v3M5 1v3M1 4h5v3l-1 2H2L1 7zM3.500 9v3" /><rect x="5" y="4" width="16" height="13" /><path d="M22.500 8v5" /><rect x="7" y="6" width="9" height="9" fill="#fff" stroke="none" /></svg>
        </div>
        <div className="w-[37px] flex justify-center">
          <svg width="20" height="20" viewBox="0 0 20 20" fill="none" stroke="#fff" strokeWidth="1.200"><path d="M1 19C1 9 9 1 19 1M5 19c0-8 6-14 14-14M9 19c0-5 5-10 10-10M13 19c0-3 3-6 6-6" /><circle cx="17.500" cy="17.500" r="1.500" fill="#fff" stroke="none" /></svg>
        </div>
        <div className="w-[34px] flex justify-center"><VolumeX size={24} strokeWidth={1.1} /></div>
        <span className="ml-[13px] w-[42px] text-[17.500px] tracking-[-0.3px]">FRA</span>
        <div className="w-[110px] flex flex-col items-center text-[18px] leading-[27px] tracking-[-0.2px] -mt-[1px]">
          <span>13:44</span>
          <span>23/01/2024</span>
        </div>
        <div className="ml-[20px] w-[25px] flex justify-center">
          <svg width="26" height="28" viewBox="0 0 26 28" fill="none" stroke="#fff" strokeWidth="1.300"><path d="M1 1h24v21h-8l-4 4-4-4H1z" /></svg>
        </div>
      </div>
    </div>
  )
}
